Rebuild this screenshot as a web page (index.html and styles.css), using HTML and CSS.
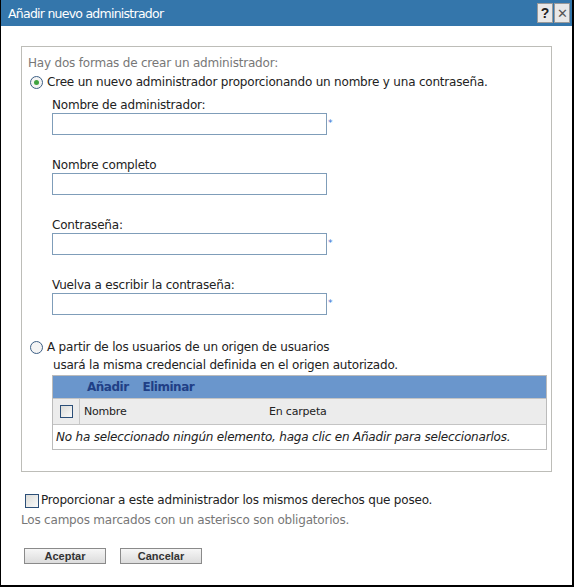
FILE: index.html
```html
<!DOCTYPE html>
<html lang="es">
<head>
<meta charset="utf-8">
<link rel="stylesheet" href="styles.css">
</head>
<body>
<div class="window">
  <div class="titlebar">
    <span class="title">Añadir nuevo administrador</span>
    <div class="tbtns">
      <span class="tbtn">?</span>
      <span class="tbtn close">✕</span>
    </div>
  </div>
  <div class="content">
    <div class="box">
      <div class="intro">Hay dos formas de crear un administrador:</div>
      <label class="opt"><span class="radio on"></span><span>Cree un nuevo administrador proporcionando un nombre y una contraseña.</span></label>
      <div class="fields">
        <div class="field">
          <div class="flabel">Nombre de administrador:</div>
          <div class="frow"><span class="input"></span><span class="req">*</span></div>
        </div>
        <div class="field">
          <div class="flabel">Nombre completo</div>
          <div class="frow"><span class="input"></span></div>
        </div>
        <div class="field">
          <div class="flabel">Contraseña:</div>
          <div class="frow"><span class="input"></span><span class="req">*</span></div>
        </div>
        <div class="field">
          <div class="flabel">Vuelva a escribir la contraseña:</div>
          <div class="frow"><span class="input"></span><span class="req">*</span></div>
        </div>
      </div>
      <label class="opt opt2"><span class="radio"></span><span>A partir de los usuarios de un origen de usuarios</span></label>
      <div class="sub">usará la misma credencial definida en el origen autorizado.</div>
      <div class="table">
        <div class="toolbar"><span class="tlink">Añadir</span><span class="tlink">Eliminar</span></div>
        <div class="thead">
          <div class="tcheck"><span class="cb"></span></div>
          <div class="tname">Nombre</div>
          <div class="tfolder">En carpeta</div>
        </div>
        <div class="trow">No ha seleccionado ningún elemento, haga clic en Añadir para seleccionarlos.</div>
      </div>
    </div>
    <label class="same"><span class="cb"></span><span>Proporcionar a este administrador los mismos derechos que poseo.</span></label>
    <div class="note">Los campos marcados con un asterisco son obligatorios.</div>
    <div class="buttons">
      <span class="btn">Aceptar</span>
      <span class="btn">Cancelar</span>
    </div>
  </div>
</div>
</body>
</html>
```

FILE: styles.css
```css
html, body {
  margin: 0;
  padding: 0;
  background: #fff;
}
body {
  font-family: "DejaVu Sans", Verdana, sans-serif;
  font-size: 12px;
  letter-spacing: -0.2px;
  color: #222;
}
.window {
  width: 571px;
  height: 585px;
  border-left: 1px solid #000;
  border-right: 2px solid #000;
  border-bottom: 2px solid #000;
  position: relative;
  overflow: hidden;
}
.titlebar {
  height: 26px;
  background: #3476ab;
  display: flex;
  align-items: center;
  justify-content: space-between;
  padding: 0 2px 0 7px;
}
.title {
  color: #fff;
  font-size: 12.5px;
  letter-spacing: -0.75px;
}
.tbtns {
  display: flex;
  gap: 1px;
  align-self: flex-start;
  margin-top: 3px;
}
.tbtn {
  width: 14px;
  height: 18px;
  background: #e8e8e8;
  border: 1px solid #999;
  display: flex;
  align-items: center;
  justify-content: center;
  font-family: "Liberation Sans", Arial, sans-serif;
  font-weight: bold;
  font-size: 14px;
  letter-spacing: 0;
  color: #222;
}
.tbtn.close {
  font-weight: normal;
  color: #555;
  font-size: 13px;
}
.content {
  padding: 20px 20px 0 20px;
}
.box {
  border: 1px solid #bdbdb8;
  padding: 9px 0 0 6px;
  box-sizing: border-box;
  height: 426px;
}
.intro {
  color: #777;
  line-height: 15px;
}
.opt {
  display: flex;
  align-items: center;
  gap: 4px;
  margin-top: 4px;
  line-height: 15px;
  padding-left: 2px;
}
.radio {
  width: 11px;
  height: 11px;
  border: 1px solid #3c5f85;
  border-radius: 50%;
  background: #f4f4f4;
  position: relative;
  flex: none;
}
.radio.on::after {
  content: "";
  position: absolute;
  left: 3px;
  top: 3px;
  width: 5px;
  height: 5px;
  border-radius: 50%;
  background: #3fa33f;
}
.fields {
  padding-left: 24px;
  padding-top: 8px;
}
.field {
  height: 60px;
}
.flabel {
  line-height: 15px;
  height: 15px;
}
.frow {
  display: flex;
  align-items: center;
  margin-top: 0;
  height: 22px;
}
.input {
  width: 273px;
  height: 20px;
  border: 1px solid #7f9db9;
  background: #fff;
  display: block;
  flex: none;
}
.req {
  color: #3a6fd0;
  font-size: 9px;
  line-height: 9px;
  margin-left: 1px;
  margin-top: -2px;
}
.opt2 {
  margin-top: 2px;
}
.sub {
  padding-left: 25px;
  line-height: 15px;
  margin-top: 3px;
}
.table {
  margin: 2px 0 0 24px;
  width: 495px;
  border: 1px solid #bbb;
  box-sizing: border-box;
}
.toolbar {
  height: 22px;
  background: #6a96cc;
  display: flex;
  align-items: center;
  padding-left: 34px;
  gap: 14px;
}
.tlink {
  color: #1f3f86;
  font-weight: bold;
  font-size: 12px;
  letter-spacing: -0.5px;
}
.thead {
  height: 25px;
  background: #ececec;
  display: flex;
  align-items: center;
  border-top: 1px solid #c4c4c4;
  border-bottom: 1px solid #c4c4c4;
  font-size: 11px;
}
.tcheck {
  width: 26px;
  height: 100%;
  border-right: 1px solid #c8c8c8;
  display: flex;
  align-items: center;
  justify-content: center;
}
.tname {
  width: 185px;
  padding-left: 4px;
}
.cb {
  width: 11px;
  height: 11px;
  border: 1px solid #2c4f78;
  background: linear-gradient(135deg, #dcdcd8, #fafafa);
  display: inline-block;
  flex: none;
}
.trow {
  height: 24px;
  line-height: 24px;
  padding-left: 3px;
  font-style: italic;
}
.same {
  display: flex;
  align-items: center;
  gap: 2px;
  margin-top: 21px;
  padding-left: 4px;
  line-height: 15px;
}
.same .cb {
  width: 12px;
  height: 12px;
}
.note {
  color: #777;
  margin-top: 5px;
  line-height: 15px;
}
.buttons {
  display: flex;
  gap: 14px;
  margin-top: 20px;
  padding-left: 3px;
}
.btn {
  width: 80px;
  height: 14px;
  border: 1px solid #8a8a8a;
  background: linear-gradient(#f6f6f6, #dcdcdc);
  font-family: "Liberation Sans", Arial, sans-serif;
  font-weight: bold;
  font-size: 11px;
  letter-spacing: 0;
  color: #333;
  display: flex;
  align-items: center;
  justify-content: center;
}
```
